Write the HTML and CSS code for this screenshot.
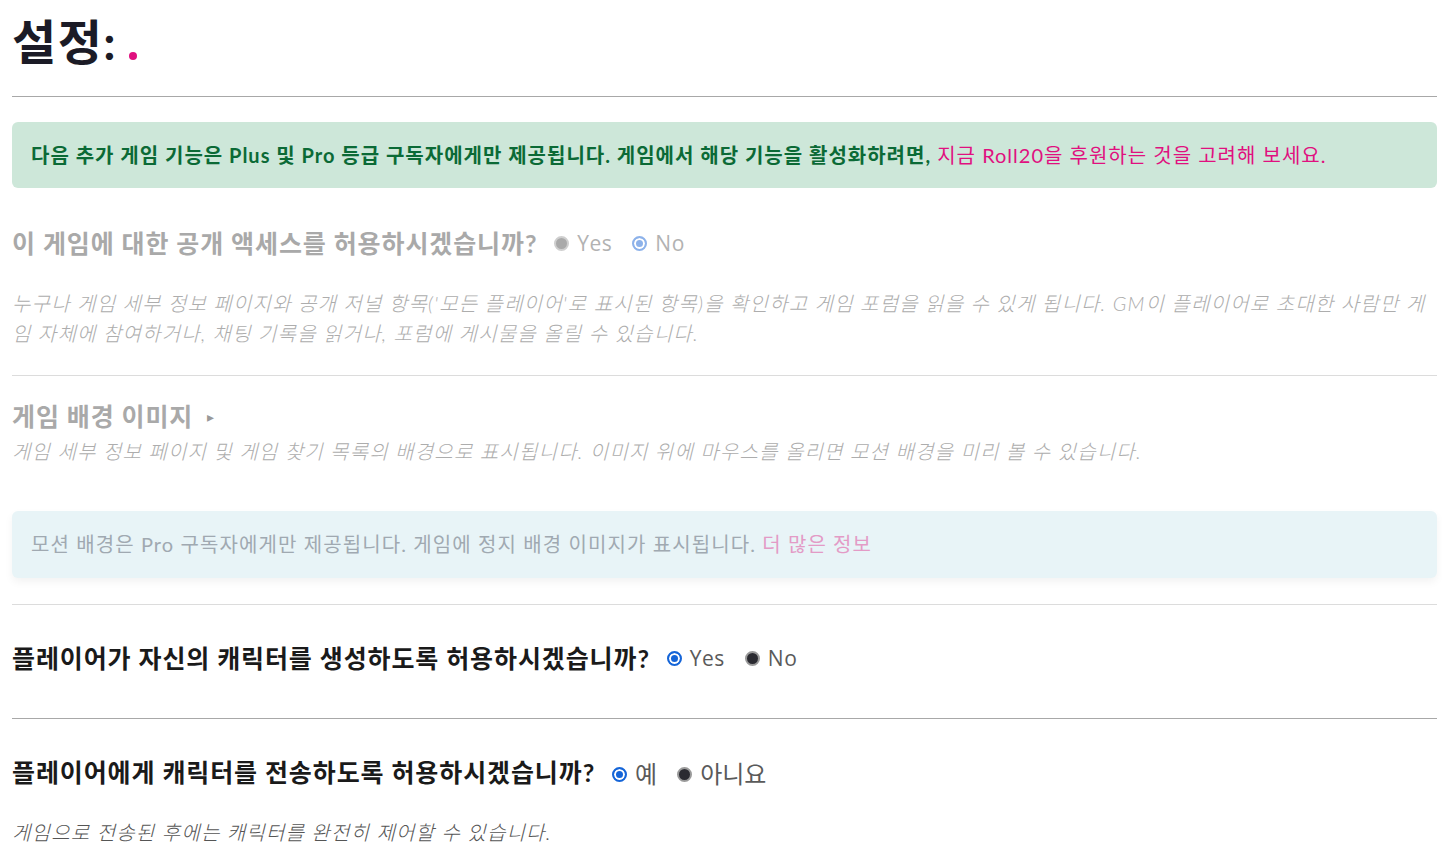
FILE: index.html
```html
<!DOCTYPE html>
<html lang="ko">
<head>
    <meta charset="UTF-8">
    <meta name="viewport" content="width=device-width, initial-scale=1.0">
    <title>설정</title>
    <link rel="stylesheet" href="styles.css">
</head>
<body>

<div class="page">
    <h1 class="title">설정: <span class="dot"></span></h1>
    <hr class="rule rule-dark">

    <div class="notice notice-green">
        <strong>다음 추가 게임 기능은 Plus 및 Pro 등급 구독자에게만 제공됩니다. 게임에서 해당 기능을 활성화하려면,</strong>
        <a href="#">지금 Roll20을 후원하는 것을 고려해 보세요.</a>
    </div>

    <div class="setting disabled" id="public-access">
        <div class="question-row">
            <span class="question">이 게임에 대한 공개 액세스를 허용하시겠습니까?</span>
            <label class="option"><input type="radio" name="public" disabled> Yes</label>
            <label class="option"><input type="radio" name="public" checked disabled> No</label>
        </div>
        <p class="help help-first">누구나 게임 세부 정보 페이지와 공개 저널 항목('모든 플레이어'로 표시된 항목)을 확인하고 게임 포럼을 읽을 수 있게 됩니다. GM이 플레이어로 초대한 사람만 게임 자체에 참여하거나, 채팅 기록을 읽거나, 포럼에 게시물을 올릴 수 있습니다.</p>
    </div>
    <hr class="rule rule-light rule-after-help">

    <div class="setting disabled" id="background-image">
        <div class="question-row heading-row">
            <span class="question">게임 배경 이미지</span>
            <span class="caret">&#9656;</span>
        </div>
        <p class="help help-tight">게임 세부 정보 페이지 및 게임 찾기 목록의 배경으로 표시됩니다. 이미지 위에 마우스를 올리면 모션 배경을 미리 볼 수 있습니다.</p>
        <div class="notice notice-blue">
            모션 배경은 Pro 구독자에게만 제공됩니다. 게임에 정지 배경 이미지가 표시됩니다. <a href="#">더 많은 정보</a>
        </div>
    </div>
    <hr class="rule rule-light rule-after-box">

    <div class="setting" id="create-characters">
        <div class="question-row">
            <span class="question">플레이어가 자신의 캐릭터를 생성하도록 허용하시겠습니까?</span>
            <label class="option"><input type="radio" name="create" checked> Yes</label>
            <label class="option"><input type="radio" name="create"> No</label>
        </div>
    </div>
    <hr class="rule rule-dark rule-after-question">

    <div class="setting" id="transfer-characters">
        <div class="question-row">
            <span class="question">플레이어에게 캐릭터를 전송하도록 허용하시겠습니까?</span>
            <label class="option option-ko"><input type="radio" name="transfer" checked> 예</label>
            <label class="option option-ko"><input type="radio" name="transfer"> 아니요</label>
        </div>
        <p class="help help-first">게임으로 전송된 후에는 캐릭터를 완전히 제어할 수 있습니다.</p>
    </div>
</div>

</body>
</html>
```

FILE: styles.css
```css
body {
    margin: 0;
    font-family: Lato, "Noto Sans CJK KR", sans-serif;
    color: #1a1a1a;
    background-color: #fff;
}

.page {
    width: 1425px;
    margin-left: 12px;
}

.title {
    margin: 14px 0 26px;
    font-size: 48px;
    line-height: 56px;
    letter-spacing: 1.5px;
    font-weight: 700;
    color: #1b1b26;
    display: flex;
    align-items: baseline;
}

.dot {
    display: inline-block;
    width: 8px;
    height: 8px;
    margin-left: 12px;
    border-radius: 50%;
    background-color: #e0107f;
}

.rule {
    border: 0;
    margin: 0;
    height: 0;
}

.rule-dark {
    border-top: 1px solid #a8a8a8;
}

.rule-light {
    border-top: 1px solid #dcdcdc;
}

.notice {
    border-radius: 6px;
    padding: 20px 19px;
    font-size: 20px;
    line-height: 26px;
    letter-spacing: 1px;
}

.notice a {
    color: #e0107f;
    text-decoration: none;
}

.notice-green {
    margin-top: 25px;
    background-color: #cde7d9;
    color: #0b6a36;
}

.notice-green strong {
    font-weight: 700;
}

.notice-blue {
    margin-top: 45px;
    padding: 20px 19px 21px;
    letter-spacing: 1.1px;
    background-color: #e8f4f7;
    color: #a0a9b1;
    box-shadow: 0 4px 8px rgba(0, 0, 0, 0.05);
}

.notice-blue a {
    color: #e39bc6;
}

.setting {
    margin-top: 39px;
}

#background-image {
    margin-top: 24px;
}

#create-characters,
#transfer-characters {
    margin-top: 37px;
}

.question-row {
    display: flex;
    align-items: center;
    height: 32px;
}

.question {
    font-size: 25px;
    line-height: 32px;
    letter-spacing: 0.9px;
    font-weight: 700;
    margin-right: 7px;
}

.option {
    display: flex;
    align-items: center;
    font-family: "Open Sans", "Noto Sans CJK KR", sans-serif;
    font-size: 21px;
    letter-spacing: 0.5px;
    color: #5a5a5a;
    margin-left: 10px;
    margin-right: 10px;
}

.option-ko {
    font-size: 24px;
    letter-spacing: 0;
}

.option input {
    appearance: none;
    width: 15px;
    height: 15px;
    margin: 0 8px 0 0;
    border-radius: 50%;
    border: 2px solid #9a9a9a;
    background-color: #2b2b31;
}

.option-ko input {
    margin-top: 4px;
}

.option input:checked {
    border-color: #1565d8;
    background-color: #1565d8;
    box-shadow: inset 0 0 0 2px #fff;
}

.help {
    margin: 0;
    font-size: 20px;
    line-height: 30px;
    letter-spacing: 1.2px;
    font-style: italic;
    font-weight: 300;
    color: #555;
}

.help-first {
    margin-top: 29px;
}

.help-tight {
    margin-top: 4px;
}

.rule-after-help {
    margin-top: 27px;
}

.rule-after-box {
    margin-top: 26px;
}

.rule-after-question {
    margin-top: 44px;
}

.heading-row .question {
    margin-right: 14px;
}

.caret {
    font-size: 14px;
    color: #999;
}

.disabled .question {
    color: #a9a9a9;
}

.disabled .option {
    color: #b2b2b2;
}

.disabled .option input {
    background-color: #a9a9a9;
    border-color: #cfcfcf;
}

.disabled .option input:checked {
    border-color: #8db2ea;
    background-color: #8db2ea;
}

.disabled .help {
    color: #adadad;
}
```
